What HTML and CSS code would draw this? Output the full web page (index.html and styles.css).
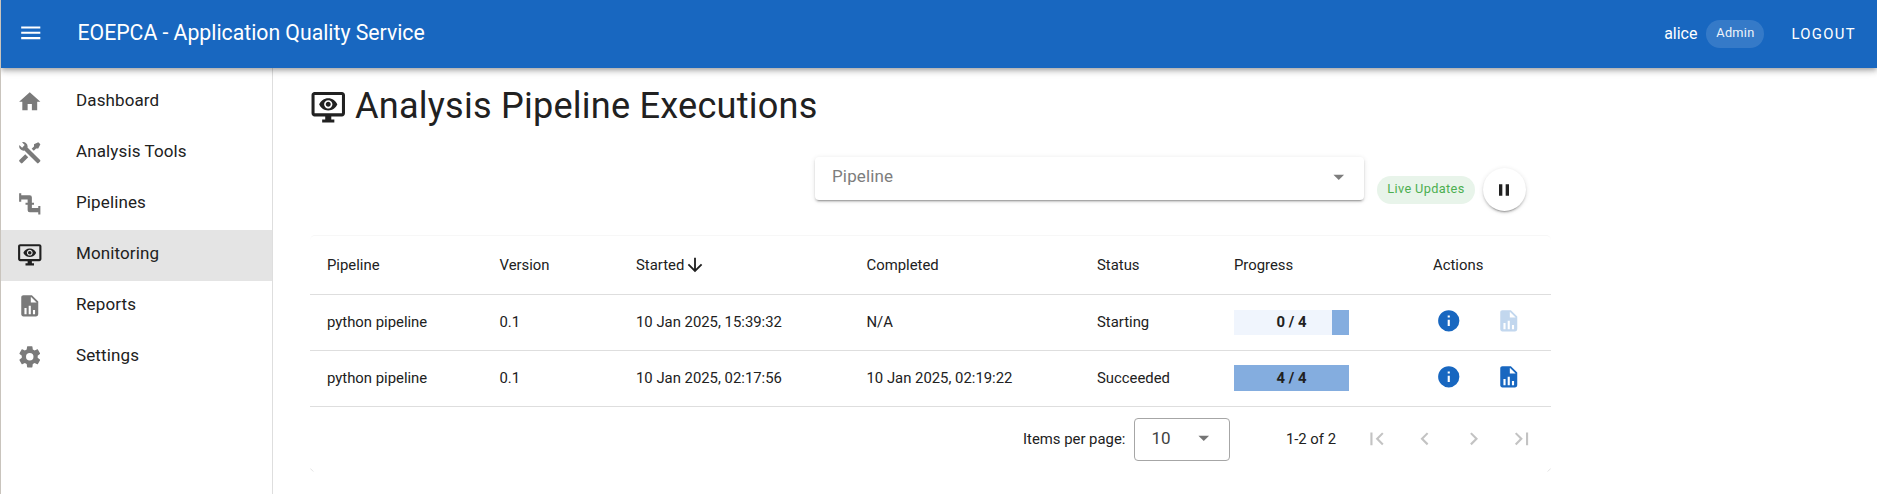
FILE: index.html
```html
<!DOCTYPE html>
<html lang="en">
<head>
<meta charset="utf-8">
<title>EOEPCA - Application Quality Service</title>
<link rel="stylesheet" href="styles.css">
</head>
<body>
<svg class="sprite" aria-hidden="true">
  <symbol id="menu" viewBox="0 0 24 24"><path d="M3,6H21V8H3V6M3,11H21V13H3V11M3,16H21V18H3V16Z"/></symbol>
  <symbol id="home" viewBox="0 0 24 24"><path d="M10,20V14H14V20H19V12H22L12,3L2,12H5V20H10Z"/></symbol>
  <symbol id="tools" viewBox="0 0 24 24"><path d="M21.71 20.29L20.29 21.71A1 1 0 0 1 18.88 21.71L7 9.85A3.81 3.81 0 0 1 6 10A4 4 0 0 1 2.22 4.7L4.76 7.24L5.29 6.71L6.71 5.29L7.24 4.76L4.7 2.22A4 4 0 0 1 10 6A3.81 3.81 0 0 1 9.85 7L21.71 18.88A1 1 0 0 1 21.71 20.29M2.29 18.88A1 1 0 0 0 2.29 20.29L3.71 21.71A1 1 0 0 0 5.12 21.71L10.59 16.25L7.76 13.42M20 2L16 4V6L13.83 8.17L15.83 10.17L18 8H20L22 4Z"/></symbol>
  <symbol id="pipe" viewBox="0 0 24 24"><path d="M22,14H20V16H14V13H16V11H14V6A2,2 0 0,0 12,4H4V2H2V10H4V8H10V11H8V13H10V18A2,2 0 0,0 12,20H20V22H22"/></symbol>
  <symbol id="monitor-eye" viewBox="0 0 24 24"><path d="M3 4V16H21V4H3M3 2H21C22.1 2 23 2.89 23 4V16C23 16.53 22.79 17.04 22.41 17.41C22.04 17.79 21.53 18 21 18H14V20H16V22H8V20H10V18H3C2.47 18 1.96 17.79 1.59 17.41C1.21 17.04 1 16.53 1 16V4C1 2.89 1.89 2 3 2M10.84 8.93C11.15 8.63 11.57 8.45 12 8.45C12.43 8.46 12.85 8.63 13.16 8.94C13.46 9.24 13.64 9.66 13.64 10.09C13.64 10.53 13.46 10.94 13.16 11.25C12.85 11.56 12.43 11.73 12 11.73C11.57 11.73 11.15 11.55 10.84 11.25C10.54 10.94 10.36 10.53 10.36 10.09C10.36 9.66 10.54 9.24 10.84 8.93M10.07 12C10.58 12.53 11.28 12.82 12 12.82C12.72 12.82 13.42 12.53 13.93 12C14.44 11.5 14.73 10.81 14.73 10.09C14.73 9.37 14.44 8.67 13.93 8.16C13.42 7.65 12.72 7.36 12 7.36C11.28 7.36 10.58 7.65 10.07 8.16C9.56 8.67 9.27 9.37 9.27 10.09C9.27 10.81 9.56 11.5 10.07 12M6 10.09C6.94 7.7 9.27 6 12 6C14.73 6 17.06 7.7 18 10.09C17.06 12.5 14.73 14.18 12 14.18C9.27 14.18 6.94 12.5 6 10.09Z"/></symbol>
  <symbol id="file-chart" viewBox="0 0 24 24"><path d="M13,9H18.5L13,3.5V9M6,2H14L20,8V20A2,2 0 0,1 18,22H6C4.89,22 4,21.1 4,20V4C4,2.89 4.89,2 6,2M7,20H9V14H7V20M11,20H13V12H11V20M15,20H17V16H15V20Z"/></symbol>
  <symbol id="cog" viewBox="0 0 24 24"><path d="M12,15.5A3.5,3.5 0 0,1 8.5,12A3.5,3.5 0 0,1 12,8.5A3.5,3.5 0 0,1 15.5,12A3.5,3.5 0 0,1 12,15.5M19.43,12.97C19.47,12.65 19.5,12.33 19.5,12C19.5,11.67 19.47,11.34 19.43,11L21.54,9.37C21.73,9.22 21.78,8.95 21.66,8.73L19.66,5.27C19.54,5.05 19.27,4.96 19.05,5.05L16.56,6.05C16.04,5.66 15.5,5.32 14.87,5.07L14.5,2.42C14.46,2.18 14.25,2 14,2H10C9.75,2 9.54,2.18 9.5,2.42L9.13,5.07C8.5,5.32 7.96,5.66 7.44,6.05L4.95,5.05C4.73,4.96 4.46,5.05 4.34,5.27L2.34,8.73C2.21,8.95 2.27,9.22 2.46,9.37L4.57,11C4.53,11.34 4.5,11.67 4.5,12C4.5,12.33 4.53,12.65 4.57,12.97L2.46,14.63C2.27,14.78 2.21,15.05 2.34,15.27L4.34,18.73C4.46,18.95 4.73,19.03 4.95,18.95L7.44,17.94C7.96,18.34 8.5,18.68 9.13,18.93L9.5,21.58C9.54,21.82 9.75,22 10,22H14C14.25,22 14.46,21.82 14.5,21.58L14.87,18.93C15.5,18.67 16.04,18.34 16.56,17.94L19.05,18.95C19.27,19.03 19.54,18.95 19.66,18.73L21.66,15.27C21.78,15.05 21.73,14.78 21.54,14.63L19.43,12.97Z"/></symbol>
  <symbol id="arrow-down" viewBox="0 0 24 24"><path d="M11,4H13V16L18.5,10.5L19.92,11.92L12,19.84L4.08,11.92L5.5,10.5L11,16V4Z"/></symbol>
  <symbol id="menu-down" viewBox="0 0 24 24"><path d="M7,10L12,15L17,10H7Z"/></symbol>
  <symbol id="pause" viewBox="0 0 24 24"><path d="M14,19H18V5H14M6,19H10V5H6V19Z"/></symbol>
  <symbol id="information" viewBox="0 0 24 24"><path d="M13,9H11V7H13M13,17H11V11H13M12,2A10,10 0 0,0 2,12A10,10 0 0,0 12,22A10,10 0 0,0 22,12A10,10 0 0,0 12,2Z"/></symbol>
  <symbol id="page-first" viewBox="0 0 24 24"><path d="M18.41,16.59L13.82,12L18.41,7.41L17,6L11,12L17,18L18.41,16.59M6,6H8V18H6V6Z"/></symbol>
  <symbol id="chevron-left" viewBox="0 0 24 24"><path d="M15.41,16.58L10.83,12L15.41,7.41L14,6L8,12L14,18L15.41,16.58Z"/></symbol>
  <symbol id="chevron-right" viewBox="0 0 24 24"><path d="M8.59,16.58L13.17,12L8.59,7.41L10,6L16,12L10,18L8.59,16.58Z"/></symbol>
  <symbol id="page-last" viewBox="0 0 24 24"><path d="M5.59,7.41L10.18,12L5.59,16.59L7,18L13,12L7,6L5.59,7.41M16,6H18V18H16V6Z"/></symbol>
</svg>
<div class="app">
  <header class="app-bar">
    <svg class="icon"><use href="#menu"/></svg>
    <div class="app-title">EOEPCA - Application Quality Service</div>
    <span class="user">alice</span>
    <span class="chip chip-role">Admin</span>
    <span class="logout">LOGOUT</span>
  </header>
  <div class="body">
    <nav class="sidebar">
      <a class="nav-item"><svg class="icon"><use href="#home"/></svg><span>Dashboard</span></a>
      <a class="nav-item"><svg class="icon"><use href="#tools"/></svg><span>Analysis Tools</span></a>
      <a class="nav-item"><svg class="icon"><use href="#pipe"/></svg><span>Pipelines</span></a>
      <a class="nav-item active"><svg class="icon"><use href="#monitor-eye"/></svg><span>Monitoring</span></a>
      <a class="nav-item"><svg class="icon"><use href="#file-chart"/></svg><span>Reports</span></a>
      <a class="nav-item"><svg class="icon"><use href="#cog"/></svg><span>Settings</span></a>
    </nav>
    <main class="main">
      <h1 class="heading"><svg class="icon heading-icon"><use href="#monitor-eye"/></svg><span>Analysis Pipeline Executions</span></h1>
      <div class="filters">
        <div class="select"><span>Pipeline</span><svg class="icon"><use href="#menu-down"/></svg></div>
        <span class="chip chip-live">Live Updates</span>
        <button class="pause"><svg class="icon pause-icon"><use href="#pause"/></svg></button>
      </div>
      <section class="card">
        <div class="row head">
          <span>Pipeline</span><span>Version</span><span class="sorted">Started<svg class="icon sort-icon"><use href="#arrow-down"/></svg></span><span>Completed</span><span>Status</span><span>Progress</span><span>Actions</span>
        </div>
        <div class="row">
          <span>python pipeline</span><span>0.1</span><span>10 Jan 2025, 15:39:32</span><span>N/A</span><span>Starting</span>
          <div class="progress pending"><div class="bar" style="width:17px"></div><b class="count">0 / 4</b></div>
          <div class="actions pending"><svg class="icon"><use href="#information"/></svg><svg class="icon disabled"><use href="#file-chart"/></svg></div>
        </div>
        <div class="row">
          <span>python pipeline</span><span>0.1</span><span>10 Jan 2025, 02:17:56</span><span>10 Jan 2025, 02:19:22</span><span>Succeeded</span>
          <div class="progress full"><div class="bar" style="width:100%"></div><b class="count">4 / 4</b></div>
          <div class="actions"><svg class="icon"><use href="#information"/></svg><svg class="icon"><use href="#file-chart"/></svg></div>
        </div>
        <footer class="footer">
          <span>Items per page:</span>
          <div class="page-size"><span>10</span><svg class="icon"><use href="#menu-down"/></svg></div>
          <span class="range">1-2 of 2</span>
          <div class="pager">
            <svg class="icon"><use href="#page-first"/></svg>
            <svg class="icon"><use href="#chevron-left"/></svg>
            <svg class="icon"><use href="#chevron-right"/></svg>
            <svg class="icon"><use href="#page-last"/></svg>
          </div>
        </footer>
        <div class="card-end">
          <svg class="corner" viewBox="0 0 4 4"><path d="M0.3 0.5L3.3 3.5"/></svg>
          <svg class="corner" viewBox="0 0 4 4"><path d="M3.7 0.5L0.7 3.5"/></svg>
        </div>
      </section>
    </main>
  </div>
</div>
</body>
</html>
```
FILE: styles.css
```css
* { box-sizing: border-box; }
body {
  margin: 0;
  font-family: Roboto, "Liberation Sans", sans-serif;
  font-size: 14.875px;
  color: #212121;
  background: #fff;
}
.sprite { display: none; }
.icon { width: 25.5px; height: 25.5px; fill: currentColor; flex: none; display: block; }
.app { height: 494px; border-left: 1px solid #c9c4bd; display: flex; flex-direction: column; overflow: hidden; }

.app-bar {
  height: 68px;
  flex: none;
  display: flex;
  align-items: center;
  padding: 0 21px 3px 17px;
  background: #1867c0;
  color: #fff;
  box-shadow: 0 2px 4px -1px rgba(0,0,0,.2), 0 4px 5px rgba(0,0,0,.14), 0 1px 10px rgba(0,0,0,.12);
  z-index: 1;
}
.app-title { flex: 1; margin-left: 34px; font-size: 21.25px; letter-spacing: -.02px; }
.user { font-size: 15.94px; padding-top: 2px; }
.chip { height: 28px; display: flex; align-items: center; justify-content: center; border-radius: 14px; font-size: 12.75px; }
.chip-role { width: 58px; margin: 3px 27px 0 9px; padding-bottom: 3px; background: rgba(255,255,255,.13); color: #f0f5fb; letter-spacing: .25px; }
.logout { letter-spacing: 1.33px; padding-top: 2px; }

.body { flex: 1; display: flex; }
.sidebar { width: 272px; padding-top: 9px; border-right: 1px solid #dedede; }
.nav-item { height: 51px; display: flex; align-items: center; padding: 0 0 2px 16px; gap: 33.5px; font-size: 17px; letter-spacing: .12px; }
.nav-item .icon { color: #7a7a7a; }
.nav-item span { padding-bottom: 3px; }
.nav-item.active { background: #e4e4e4; }
.nav-item.active .icon { color: #212121; }

.main { width: 1278px; padding-left: 37px; }
.heading { margin: 0; padding-top: 16px; height: 78px; display: flex; align-items: flex-start; gap: 8.5px; font-size: 36.125px; font-weight: 400; line-height: 44px; letter-spacing: .22px; }
.heading-icon { width: 36.5px; height: 36.5px; margin-top: 5px; }

.filters { display: flex; padding: 11px 25px 0 505px; height: 89px; align-items: flex-start; }
.select {
  width: 549px; height: 43px; display: flex; align-items: center; justify-content: space-between;
  padding: 0 13px 3px 17px; border-radius: 4px; font-size: 17px; color: #7d7d7d;
  box-shadow: 0 3px 1px -2px rgba(0,0,0,.2), 0 2px 2px rgba(0,0,0,.14), 0 1px 5px rgba(0,0,0,.12);
}
.select span { padding-bottom: 2px; letter-spacing: .15px; }
.chip-live { width: 98px; margin: 19px 8px 0 13px; padding-bottom: 3px; background: #e8f4ea; color: #4caf50; letter-spacing: .35px; }
.pause {
  width: 43px; height: 43px; margin-top: 11px; padding: 0 1px 0 0; border: 0; border-radius: 50%; background: #fff; color: #212121;
  display: flex; align-items: center; justify-content: center;
  box-shadow: 0 3px 1px -2px rgba(0,0,0,.2), 0 2px 2px rgba(0,0,0,.14), 0 1px 5px rgba(0,0,0,.12);
}
.pause-icon { width: 20px; height: 20px; }

.card { height: 236px; border-top: 1px solid #f7f7f7; border-radius: 5px; }
.row {
  height: 56px; display: grid; align-items: center; border-bottom: 1px solid #dedede; padding: 0 0 2px 17px;
  grid-template-columns: 172.5px 136.5px 230.5px 230.5px 137px 199px 1fr;
}
.row.head { height: 59px; padding-bottom: 0; }
.sorted { display: flex; align-items: center; }
.sort-icon { width: 22px; height: 22px; margin: -2px 0; }
.progress { width: 115px; height: 25px; display: grid; background: #f0f5fd; }
.progress.pending { margin-top: 2px; }
.progress.pending .count { padding-bottom: 1px; }
.progress.full { height: 26px; }
.progress > * { grid-area: 1 / 1; }
.bar { justify-self: end; background: #84addf; }
.count { align-self: center; justify-self: center; font-weight: 700; }
.actions { display: flex; gap: 34px; padding: 0 0 2px 3px; color: #1867c0; }
.actions.pending { padding-bottom: 1px; }
.disabled { opacity: .26; }

.footer { height: 64px; display: flex; align-items: center; padding-left: 713px; }
.page-size { width: 96px; height: 43px; margin-left: 9px; padding: 0 13px 2px 16px; border: 1px solid #a6a6a6; border-radius: 4px; display: flex; align-items: center; justify-content: space-between; font-size: 17px; color: #424242; }
.page-size .icon { color: #757575; }
.range { margin-left: 55.5px; }
.pager { display: flex; gap: 22.9px; margin-left: 28px; color: #c3c3c3; }
.card-end { display: flex; justify-content: space-between; margin-top: -3px; }
.corner { width: 4px; height: 4px; fill: none; stroke: #d5d5d5; stroke-width: .7; }
```
